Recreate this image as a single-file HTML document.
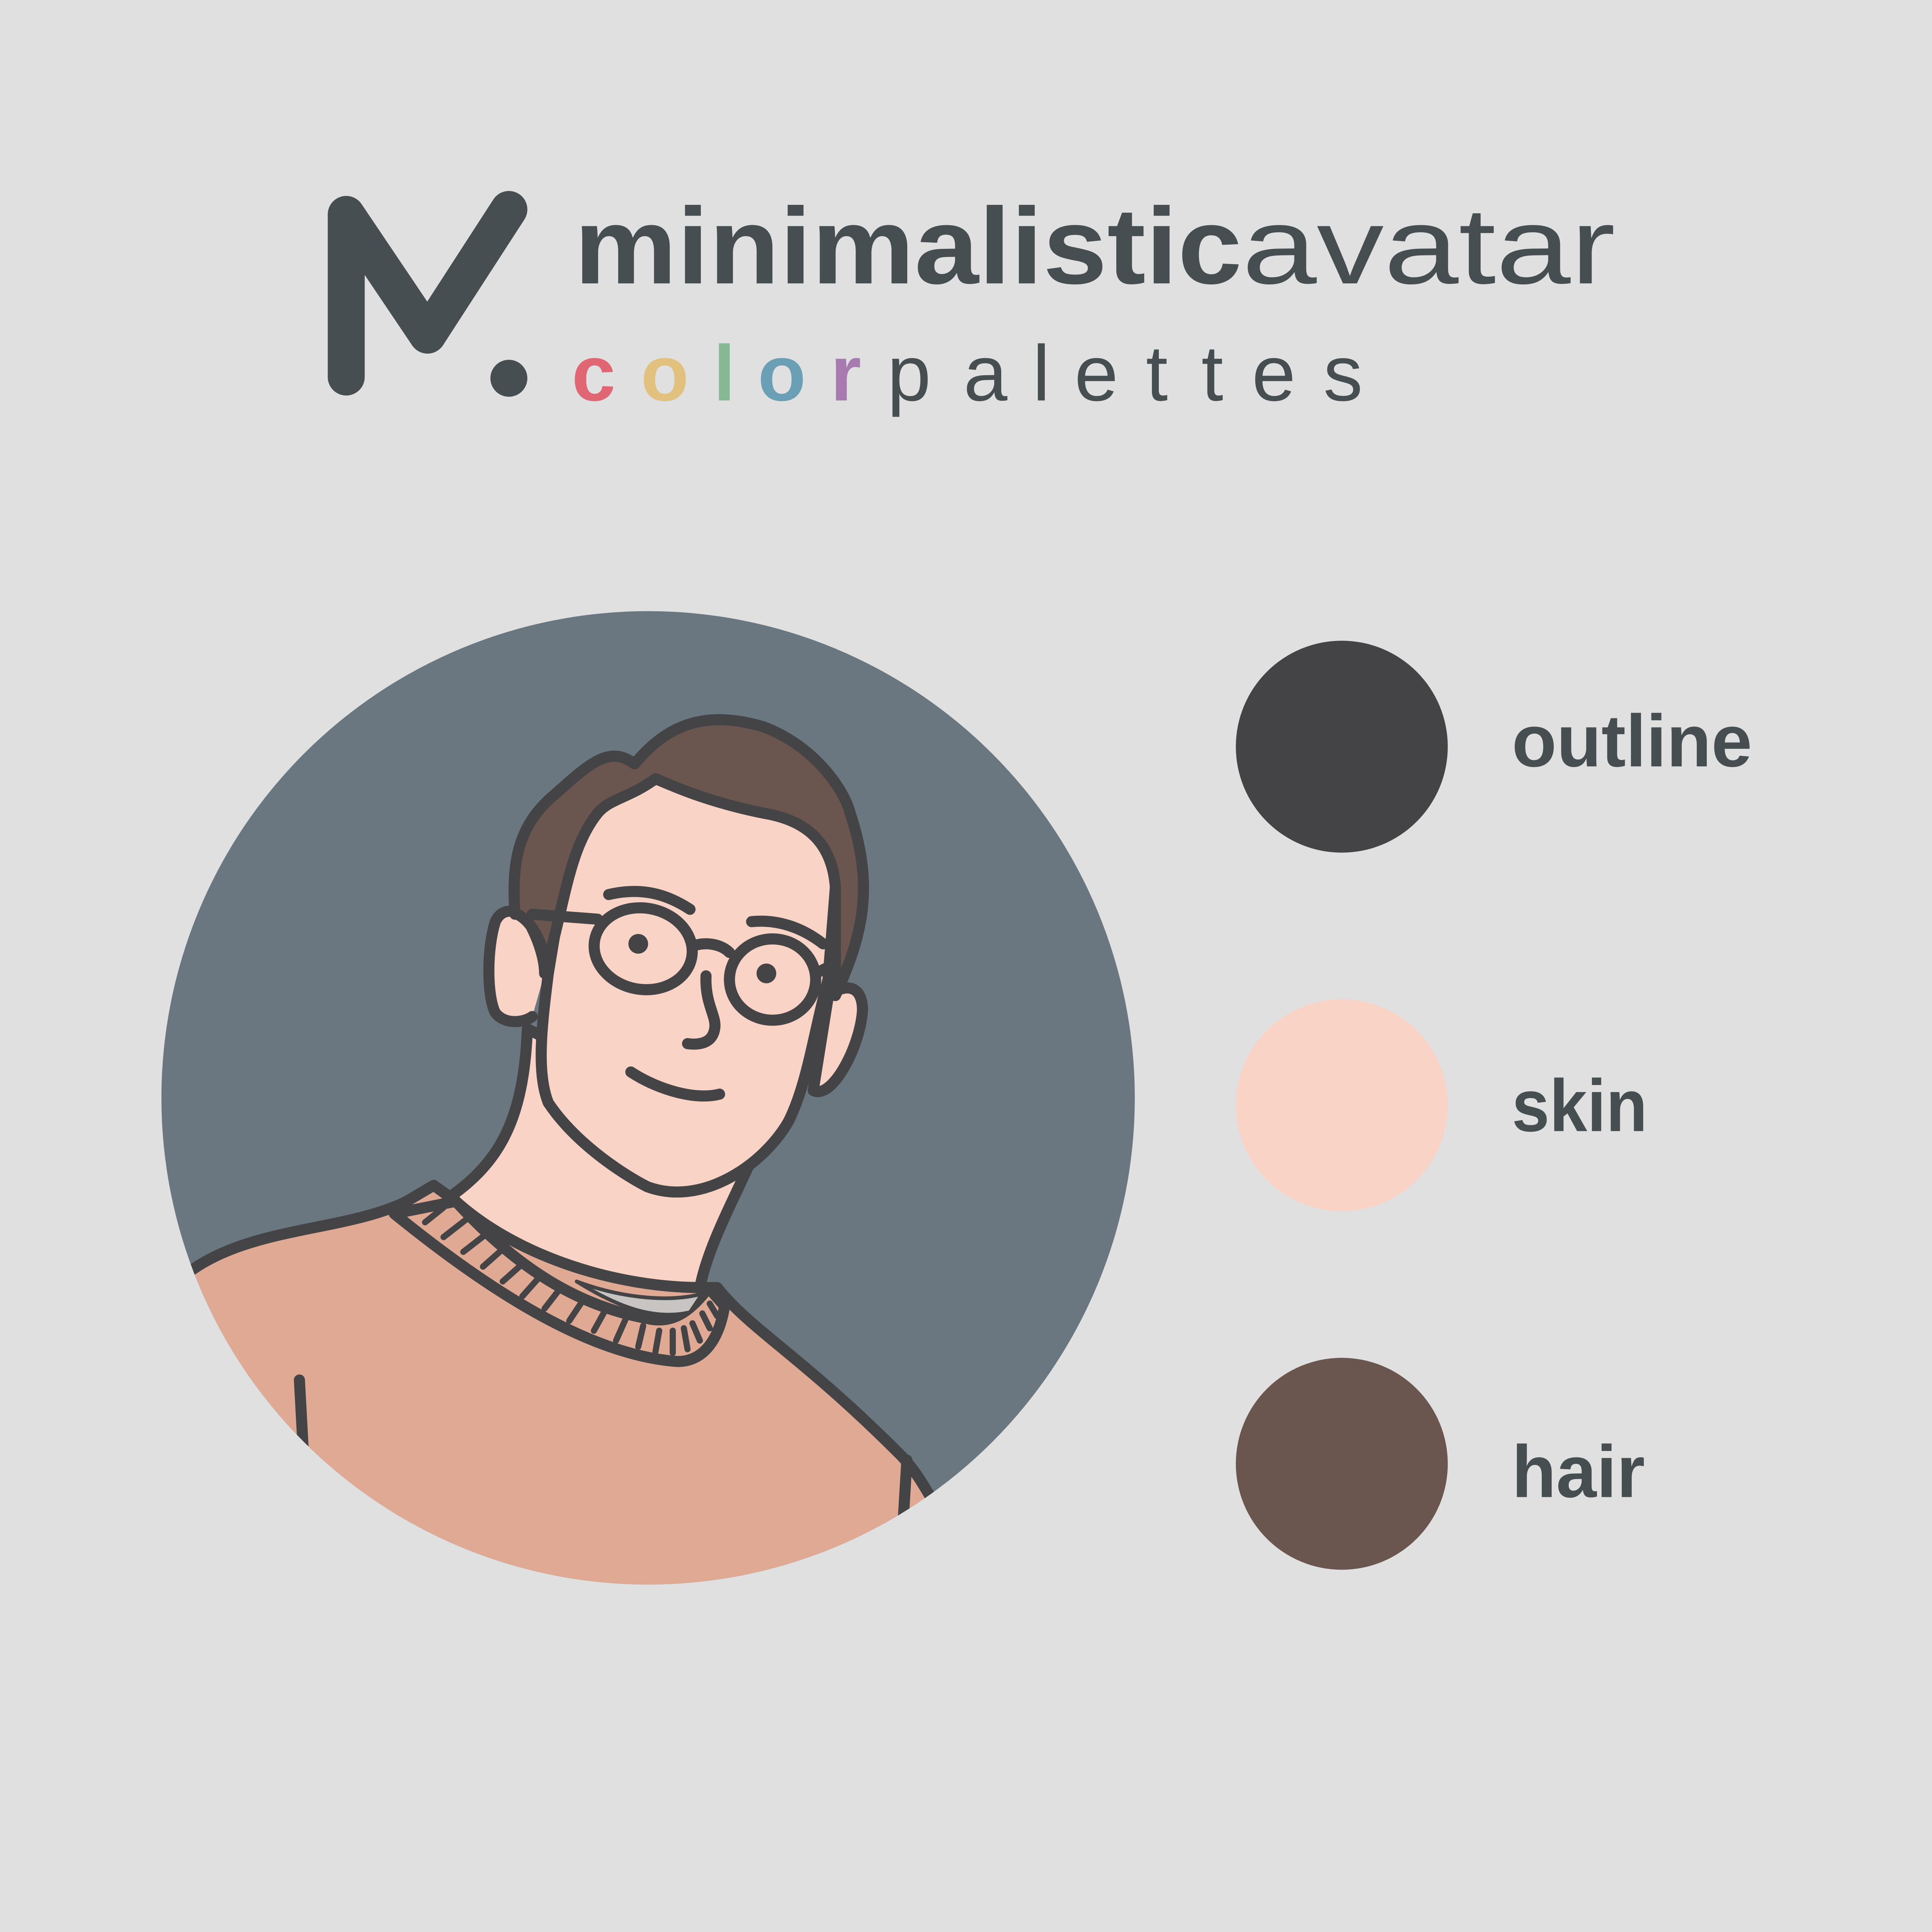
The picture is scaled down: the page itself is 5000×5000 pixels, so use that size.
<!DOCTYPE html>
<html><head><style>html,body{margin:0;padding:0;background:#e0e0e0;}svg{display:block}</style></head>
<body>
<svg width="5000" height="5000" viewBox="0 0 1568 1568" xmlns="http://www.w3.org/2000/svg">
<rect width="1568" height="1568" fill="#e0e0e0"/>
<path d="M281,306 L281,174 L347,272 L413,170" fill="none" stroke="#474e52" stroke-width="30" stroke-linecap="round" stroke-linejoin="round"/>
<circle cx="413" cy="307" r="15" fill="#474e52"/>
<text x="466" y="230" font-family="Liberation Sans, sans-serif" font-size="88" fill="#474e52"><tspan font-weight="bold" textLength="542" lengthAdjust="spacingAndGlyphs">minimalistic</tspan><tspan textLength="303" lengthAdjust="spacingAndGlyphs">avatar</tspan></text>
<text y="325" font-family="Liberation Sans, sans-serif" font-size="64" fill="#474e52">
<tspan x="464" fill="#e06673" font-weight="bold">c</tspan><tspan x="520" fill="#e2c07e" font-weight="bold">o</tspan><tspan x="579" fill="#86b894" font-weight="bold">l</tspan><tspan x="615" fill="#6b9fb5" font-weight="bold">o</tspan><tspan x="674" fill="#a87bb0" font-weight="bold">r</tspan><tspan x="720">p</tspan><tspan x="782">a</tspan><tspan x="838">l</tspan><tspan x="872">e</tspan><tspan x="930">t</tspan><tspan x="975">t</tspan><tspan x="1016">e</tspan><tspan x="1074">s</tspan></text>
<circle cx="1089" cy="606" r="86" fill="#444446"/>
<circle cx="1089" cy="897" r="86" fill="#f9d3c6"/>
<circle cx="1089" cy="1188" r="86" fill="#6b554f"/>
<g font-family="Liberation Sans, sans-serif" font-weight="bold" font-size="60" fill="#474e52">
<text x="1227" y="622" textLength="195" lengthAdjust="spacingAndGlyphs">outline</text>
<text x="1227" y="918" textLength="110" lengthAdjust="spacingAndGlyphs">skin</text>
<text x="1227" y="1215" textLength="108" lengthAdjust="spacingAndGlyphs">hair</text>
</g>
<defs><clipPath id="c"><circle cx="526" cy="891" r="395"/></clipPath></defs>
<circle cx="526" cy="891" r="395" fill="#6b7780"/>
<g clip-path="url(#c)" stroke="#444446" stroke-width="9" stroke-linecap="round" stroke-linejoin="round">
<path d="M360,975 C405,945 425,910 428,835 L615,930 C595,975 575,1010 568,1045 C500,1045 420,1020 360,975Z" fill="#f9d3c6"/>
<path d="M150,1035 C200,995 280,1000 330,975 L352,962 L370,975 C420,1020 500,1045 570,1045 L582,1045 C610,1080 650,1100 730,1180 C745,1195 752,1210 770,1240 L770,1320 L100,1320 Z" fill="#dfa993"/>
<path d="M320,985 C400,1050 480,1100 550,1105 C575,1105 585,1080 588,1060 L575,1045 C560,1065 545,1075 525,1070 C470,1060 420,1030 370,975 Z" fill="#dfa993"/>
<path d="M468,1040 C500,1052 540,1058 570,1050 L560,1065 C530,1072 500,1060 468,1040Z" fill="#c9c4c4" stroke-width="3"/>
<g stroke-width="5">
<path d="M345,992 L360,980 M360,1004 L378,990 M376,1016 L394,1002 M392,1028 L410,1012 M408,1040 L426,1024 M424,1052 L440,1034 M442,1062 L456,1044 M462,1072 L474,1054 M482,1080 L492,1062 M500,1088 L508,1070 M518,1093 L522,1076 M532,1097 L535,1080 M546,1098 L546,1080 M558,1095 L555,1078 M568,1088 L562,1074 M576,1078 L570,1066 M582,1068 L576,1058"/>
</g>
<path d="M243,1120 L246,1175 M736,1185 L733,1235" fill="none"/>
<path d="M432,825 C425,830 410,832 402,822 C395,808 395,770 402,748 C408,735 422,738 430,750 C438,765 442,780 442,790" fill="#f9d3c6"/>
<path d="M672,810 C680,800 700,795 700,820 C698,850 675,893 660,885 Z" fill="#f9d3c6"/>
<path d="M445,790 C440,830 435,870 445,895 C465,925 500,950 525,963 C570,980 620,945 640,910 C655,880 660,840 672,795 L678,720 C675,680 650,665 620,660 C570,650 540,635 532,632 C510,648 495,648 485,660 C465,685 460,720 450,760Z" fill="#f9d3c6"/>
<path d="M418,742 C415,700 420,670 450,645 C480,618 495,605 515,620 C540,590 570,575 620,590 C660,605 685,640 690,660 C710,720 700,760 678,808 L678,720 C675,680 650,665 620,660 C570,650 540,635 532,632 C510,648 495,648 485,660 C465,685 460,720 450,760 C448,768 446,776 444,780 C440,770 435,750 420,742Z" fill="#6b554f"/>
<ellipse cx="522" cy="770" rx="40" ry="33" fill="#f9d3c6" transform="rotate(10 522 770)"/>
<ellipse cx="627" cy="795" rx="35" ry="33" fill="#f9d3c6"/>
<path d="M485,746 L432,742 M562,768 C572,764 585,766 592,773 M662,790 L672,785" fill="none"/>
<circle cx="518" cy="766" r="8" fill="#444446" stroke="none"/>
<circle cx="622" cy="790" r="8" fill="#444446" stroke="none"/>
<path d="M494,726 C520,720 540,725 560,738 M610,748 C630,746 650,752 668,766 M573,792 C572,815 582,825 580,835 C578,848 565,848 558,847 M512,870 C535,885 565,893 584,888" fill="none"/>
</g>
</svg>
</body></html>
